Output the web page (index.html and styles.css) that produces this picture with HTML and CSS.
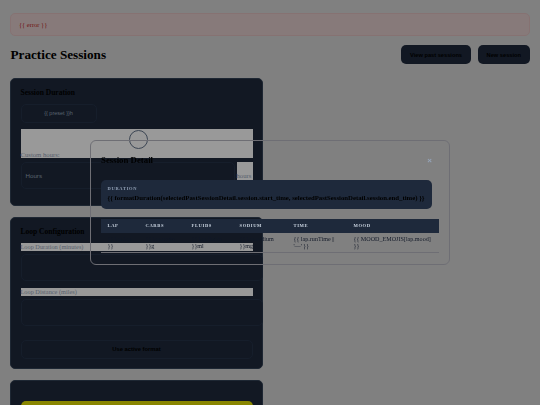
FILE: index.html
```html
<!DOCTYPE html>
<html lang="en">
<head>
  <meta charset="UTF-8">
  <meta name="viewport" content="width=device-width, initial-scale=1.0">
  <title>Practice Sessions</title>
  <link rel="stylesheet" href="styles.css">
</head>
<body>
  <div class="page">
    <div class="error">{{ error }}</div>

    <div class="header">
      <h1>Practice Sessions</h1>
      <div class="header-actions">
        <button class="btn">View past sessions</button>
        <button class="btn">New session</button>
      </div>
    </div>

    <div class="columns">
      <div class="column">
        <section class="panel panel-duration">
          <h2>Session Duration</h2>
          <button class="preset">{{ preset }}h</button>
          <div class="slider-box"><span class="thumb"></span><label>Custom hours:</label></div>
          <div class="hours-row">
            <div class="field hours-input">Hours</div>
            <span class="unit">hours</span>
          </div>
        </section>

        <section class="panel panel-loop">
          <h2>Loop Configuration</h2>
          <label class="strip">Loop Duration (minutes)</label>
          <div class="field wide"></div>
          <label class="strip">Loop Distance (miles)</label>
          <div class="field wide"></div>
          <button class="format">Use active format</button>
        </section>

        <section class="panel panel-start">
          <button class="start"></button>
        </section>
      </div>
    </div>
  </div>

  <div class="overlay">
    <div class="modal">
      <div class="modal-head">
        <h3>Session Detail</h3>
        <span class="close">×</span>
      </div>
      <div class="summary">
        <div class="summary-label">DURATION</div>
        <div class="summary-value">{{ formatDuration(selectedPastSessionDetail.session.start_time, selectedPastSessionDetail.session.end_time) }}</div>
      </div>
      <table>
        <thead>
          <tr>
            <th class="col-lap">LAP</th>
            <th class="col-carbs">CARBS</th>
            <th class="col-fluids">FLUIDS</th>
            <th class="col-sodium">SODIUM</th>
            <th class="col-time">TIME</th>
            <th class="col-mood">MOOD</th>
          </tr>
        </thead>
        <tbody>
          <tr>
            <td>{{ lap.lap }}</td>
            <td>{{ lap.carbs }}g</td>
            <td>{{ lap.fluids }}ml</td>
            <td>{{ lap.sodium }}mg</td>
            <td>{{ lap.runTime || '—' }}</td>
            <td>{{ MOOD_EMOJIS[lap.mood] }}</td>
          </tr>
        </tbody>
      </table>
    </div>
  </div>
</body>
</html>
```

FILE: styles.css
```css
* {
  box-sizing: border-box;
}
html, body {
  margin: 0;
  height: 405px;
  overflow: hidden;
  background: #d5d5d5;
}
body {
  font-family: "Liberation Serif", serif;
  color: #000;
}
button {
  font-family: "Liberation Sans", sans-serif;
  border: none;
  padding: 0;
  color: #000;
}
.page {
  padding: 13px 10px 0;
}
.error {
  height: 23px;
  padding: 0 8px;
  line-height: 22px;
  font-size: 6.5px;
  color: #b91c1c;
  background: #e2cccc;
  border: 1px solid #dfbfbf;
  border-radius: 5px;
}
.header {
  display: flex;
  justify-content: space-between;
  align-items: center;
  margin-top: 9px;
  height: 20px;
}
h1 {
  margin: 0;
  margin-left: 0.5px;
  font-size: 13.2px;
}
.header-actions {
  display: flex;
  align-self: flex-start;
  gap: 6.5px;
}
.btn {
  height: 19px;
  padding: 0 9px;
  font-size: 5.7px;
  font-weight: bold;
  background: #1e293b;
  border-radius: 5px;
}
.columns {
  margin-top: 13px;
  width: 253px;
}
.panel {
  padding: 9px 9.5px;
  background: #1e293b;
  border: 1px solid #334155;
  border-radius: 5px;
  margin-bottom: 11px;
}
.panel h2 {
  margin: 0;
  font-size: 7.5px;
  line-height: 9px;
}
.panel-duration {
  height: 128px;
}
.preset {
  display: block;
  width: 76px;
  height: 18.5px;
  margin-top: 7px;
  font-size: 5.5px;
  color: #94a3b8;
  background: transparent;
  border: 1px solid #253248;
  border-radius: 5px;
}
.slider-box {
  position: relative;
  height: 29px;
  margin-top: 6.5px;
  background: #fff;
}
.slider-box label {
  position: absolute;
  left: 0;
  bottom: 0;
  font-size: 6.7px;
  line-height: 7px;
  color: #94a3b8;
}
.thumb {
  position: absolute;
  left: 108.5px;
  top: 1px;
  width: 19px;
  height: 19px;
  border: 1px solid #64748b;
  border-radius: 50%;
}
.hours-row {
  display: flex;
  align-items: flex-start;
  gap: 2px;
  margin-top: 3.5px;
}
.field {
  border: 1px solid #253248;
  border-radius: 5px;
}
.hours-input {
  flex: 1;
  height: 27px;
  padding-left: 4px;
  font-family: "Liberation Sans", sans-serif;
  font-size: 6.2px;
  line-height: 25px;
  color: #94a3b8;
}
.unit {
  width: 16px;
  height: 18px;
  padding-top: 9px;
  font-size: 6.7px;
  line-height: 9px;
  color: #94a3b8;
  background: #fff;
}
.panel-loop {
  height: 152px;
}
.strip {
  display: block;
  height: 7.5px;
  font-size: 6.3px;
  line-height: 7.5px;
  color: #94a3b8;
  background: #fff;
}
.panel-loop .strip {
  margin-top: 7px;
}
.wide {
  width: 242px;
  height: 27.5px;
  margin-top: 3px;
}
.format {
  display: block;
  width: 100%;
  height: 18.5px;
  margin-top: 14px;
  font-size: 5.8px;
  font-weight: bold;
  background: transparent;
  border: 1px solid #253248;
  border-radius: 5px;
}
.panel-start {
  height: 60px;
  padding-top: 20px;
}
.start {
  display: block;
  width: 100%;
  height: 30px;
  background: #e4e000;
  border-radius: 5px;
}
.overlay {
  position: fixed;
  inset: 0;
  display: flex;
  align-items: center;
  justify-content: center;
  background: rgba(0, 0, 0, 0.4);
  backdrop-filter: blur(0.5px);
}
.modal {
  width: 360px;
  height: 125px;
  padding: 10px 10px 0;
  border: 1px solid #6e6e74;
  border-radius: 6px;
  filter: blur(0.4px);
}
.modal-head {
  display: flex;
  justify-content: space-between;
  align-items: center;
  height: 18px;
  padding-right: 7px;
}
h3 {
  margin: 0;
  font-size: 8.8px;
}
.close {
  font-family: "Liberation Sans", sans-serif;
  font-size: 8px;
  font-weight: bold;
  color: #94a3b8;
}
.summary {
  width: 331px;
  height: 29px;
  margin-top: 10.5px;
  padding: 6.5px 6.5px 0;
  background: #1e293b;
  border-radius: 5px;
}
.summary-label {
  font-size: 4.5px;
  line-height: 6px;
  font-weight: bold;
  letter-spacing: 0.7px;
  color: #94a3b8;
}
.summary-value {
  margin-top: 1.5px;
  font-size: 6.75px;
  line-height: 8px;
  font-weight: bold;
  white-space: nowrap;
}
table {
  width: 338px;
  margin-top: 10.5px;
  border-collapse: collapse;
  table-layout: fixed;
}
th {
  height: 13.5px;
  padding: 0 6.5px;
  font-size: 4.6px;
  letter-spacing: 0.6px;
  text-align: left;
  color: #cbd5e1;
  background: #1e293b;
}
td {
  padding: 3px 6.5px 1px;
  font-size: 6.1px;
  line-height: 7.5px;
  vertical-align: top;
  color: #111827;
  border-bottom: 1px solid #6e6e74;
}
.col-lap { width: 38px; }
.col-carbs { width: 46px; }
.col-fluids { width: 48px; }
.col-sodium { width: 54px; }
.col-time { width: 60px; }
.col-mood { width: 92px; }
```
